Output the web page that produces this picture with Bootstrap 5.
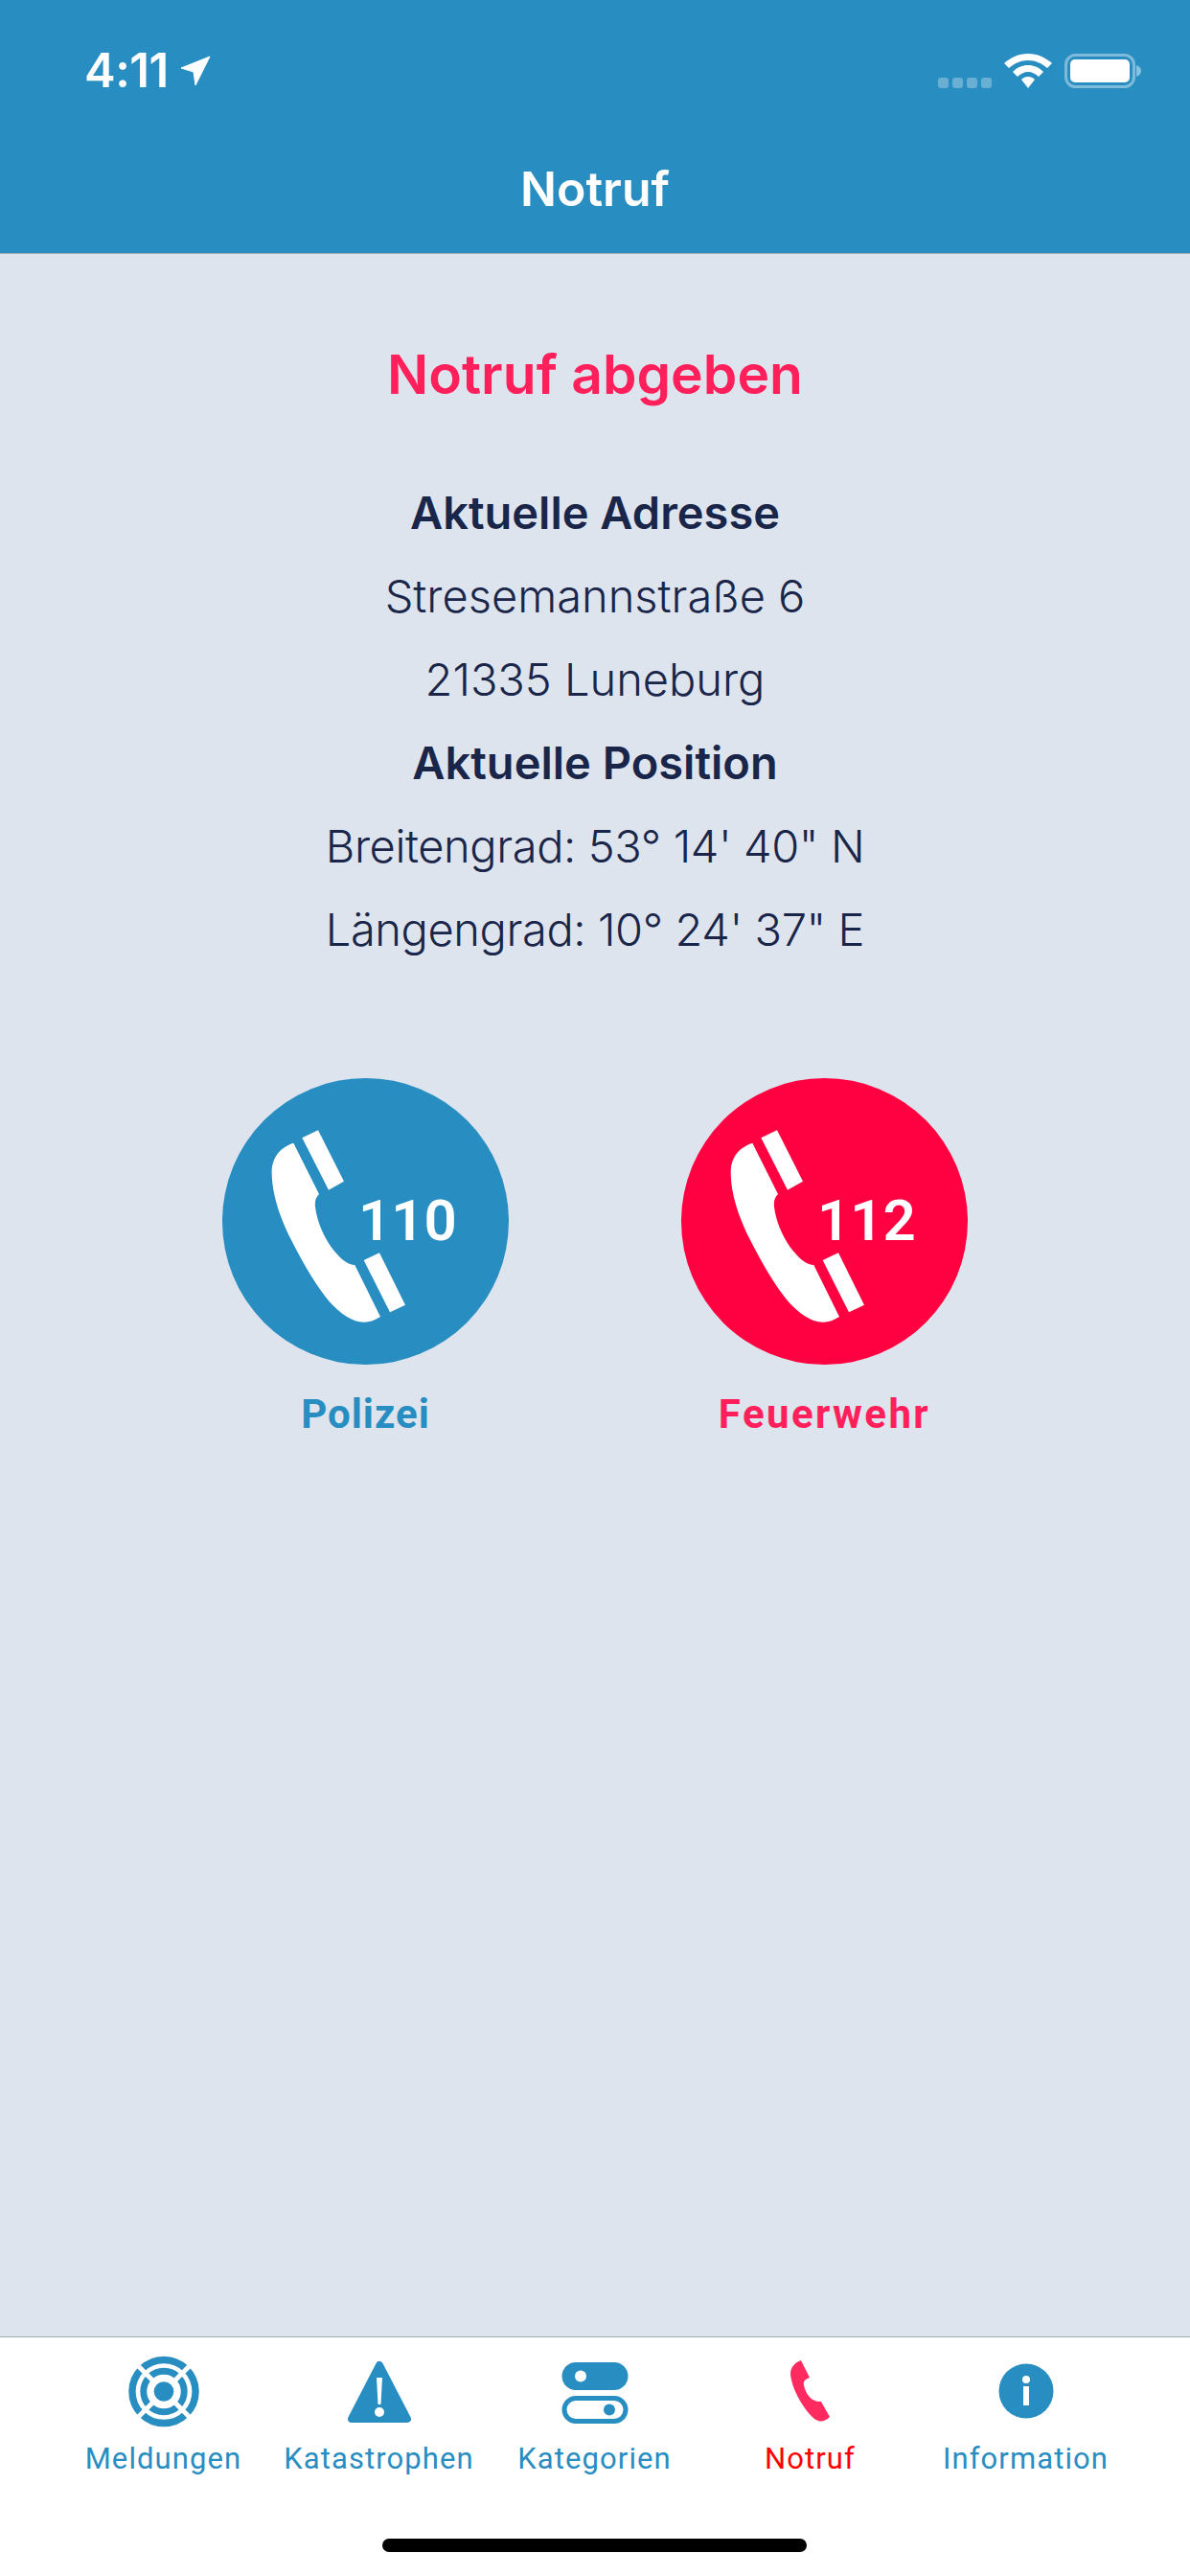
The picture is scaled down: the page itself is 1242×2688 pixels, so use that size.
<!DOCTYPE html>
<html lang="de">
<head>
  <meta charset="UTF-8"/>
  <title>Notruf</title>
  <meta name="viewport" content="width=device-width, initial-scale=1"/>
  <link href="https://cdn.jsdelivr.net/npm/bootstrap@5.3.0/dist/css/bootstrap.min.css" rel="stylesheet"/>
  <style>
    body{background:#dee4ee;font-family:'Inter',sans-serif;}
    .app-shell{width:1242px;height:2688px;}
    .top-head{background:#288dc1;height:265px;border-bottom:1px solid #a3adb8;color:#fff;}
    .status-row{height:56px;margin-top:56px;padding:0 51px 0 88px;}
    .clock{font-size:49px;font-weight:600;line-height:36px;letter-spacing:-.5px;}
    .loc-arrow{width:32px;height:31px;margin-left:12px;margin-top:2px;}
    .sig-dots{gap:4px;margin:25px 13px 0 0;}
    .sig-dots span{width:11px;height:11px;border-radius:3px;background:rgba(255,255,255,.3);}
    .wifi-ic{width:50px;height:36px;margin-right:13px;}
    .batt-ic{width:80px;height:36px;}
    .head-title{font-size:50px;font-weight:600;line-height:58px;margin-top:56px;}
    .main-body{padding-top:96px;color:#1a2649;}
    .page-title{color:#ff1f5a;font-size:57px;font-weight:600;line-height:60px;margin-bottom:70px;}
    .info-line{font-size:47px;font-weight:300;line-height:87px;height:87px;}
    .info-line.strong-line{font-weight:600;}
    .info-line.coord-line{letter-spacing:-.4px;}
    .call-row{gap:180px;margin-top:112px;}
    .call-item{width:299px;}
    .call-circle{width:299px;height:299px;}
    .call-circle.police{background:#288dc1;}
    .call-circle.fire{background:#ff0040;}
    .call-circle svg{width:299px;height:299px;display:block;}
    .call-num{position:absolute;left:142px;top:119px;color:#fff;font-family:'Roboto',sans-serif;font-weight:600;font-size:60px;line-height:60px;}
    .call-label{font-family:'Roboto',sans-serif;font-weight:700;font-size:42px;line-height:48px;margin-top:28px;}
    .call-label.police{color:#288dc1;letter-spacing:1px;}
    .call-label.fire{color:#ff1f5a;letter-spacing:2.4px;}
    .tab-bar{height:250px;background:#fff;border-top:1px solid #a3adb8;padding:0 59px 0 58px;}
    .tab-item{width:225px;color:#288dc1;font-family:'Roboto',sans-serif;font-size:31px;line-height:36px;letter-spacing:1.1px;padding-top:19px;}
    .tab-item.on{color:#ff0000;}
    .tab-ic{height:75px;display:block;margin-bottom:15px;}
    .home-bar{width:443px;height:14px;background:#000;border-radius:7px;margin:0 auto 25px;}
  </style>
</head>
<body>
<svg width="0" height="0" class="d-block position-absolute">
  <symbol id="handset" viewBox="95 75 897 897">
    <path fill="#fff" d="M318 278L398 438C388 448 384 460 386 478C392 530 420 590 456 628C470 644 490 660 510 660L590 822C570 835 550 842 525 838C490 832 450 800 420 762C380 710 340 640 300 560C270 495 250 430 250 370C250 320 280 290 318 278Z"/>
    <path fill="#fff" d="M345 262L395 238L476 398L428 425Z"/>
    <path fill="#fff" d="M538 645L587 622L668 785L620 808Z"/>
  </symbol>
</svg>
<div class="app-shell d-flex flex-column">
  <header class="top-head flex-shrink-0">
    <div class="status-row d-flex align-items-start">
      <span class="clock">4:11</span>
      <svg class="loc-arrow" viewBox="0 0 32 31"><path fill="#fff" d="M1 13L31 1L16 31L14 17Z" stroke="#fff" stroke-width="1" stroke-linejoin="round"/></svg>
      <div class="ms-auto d-flex sig-dots"><span></span><span></span><span></span><span></span></div>
      <svg class="wifi-ic" viewBox="0 0 50 36">
        <path fill="#fff" d="M25 0C35 0 43 4 50 10L45 15C39 10 33 7 25 7C17 7 11 10 5 15L0 10C7 4 15 0 25 0Z"/>
        <path fill="#fff" d="M25 12C31 12 36 14 41 19L36 24C33 21 29 19 25 19C21 19 17 21 14 24L9 19C14 14 19 12 25 12Z"/>
        <path fill="#fff" d="M25 24C28 24 30 25 32 27L25 36L18 27C20 25 22 24 25 24Z"/>
      </svg>
      <svg class="batt-ic" viewBox="0 0 80 36">
        <rect x="1.5" y="1.5" width="71" height="33" rx="10" fill="none" stroke="#fff" stroke-opacity=".4" stroke-width="3"/>
        <rect x="6" y="6" width="62" height="24" rx="5" fill="#fff"/>
        <path fill="#fff" fill-opacity=".45" d="M75 12C78 13 80 15 80 18C80 21 78 23 75 24Z"/>
      </svg>
    </div>
    <div class="head-title text-center">Notruf</div>
  </header>

  <main class="main-body flex-grow-1 text-center">
    <div class="page-title">Notruf abgeben</div>
    <div class="info-line strong-line">Aktuelle Adresse</div>
    <div class="info-line">Stresemannstraße 6</div>
    <div class="info-line">21335 Luneburg</div>
    <div class="info-line strong-line">Aktuelle Position</div>
    <div class="info-line coord-line">Breitengrad: 53° 14' 40" N</div>
    <div class="info-line coord-line">Längengrad: 10° 24' 37" E</div>
    <div class="call-row d-flex justify-content-center">
      <div class="call-item">
        <div class="call-circle police rounded-circle position-relative">
          <svg><use href="#handset"/></svg>
          <span class="call-num">110</span>
        </div>
        <div class="call-label police">Polizei</div>
      </div>
      <div class="call-item">
        <div class="call-circle fire rounded-circle position-relative">
          <svg><use href="#handset"/></svg>
          <span class="call-num">112</span>
        </div>
        <div class="call-label fire">Feuerwehr</div>
      </div>
    </div>
  </main>

  <div class="flex-shrink-0 tab-bar d-flex flex-column">
    <nav class="d-flex flex-grow-1 text-center">
      <div class="tab-item">
        <svg class="tab-ic mx-auto" width="76" viewBox="-38 -38 76 76">
          <circle r="33.5" fill="none" stroke="#288dc1" stroke-width="7.5"/>
          <circle r="21.5" fill="none" stroke="#288dc1" stroke-width="7"/>
          <path d="M-30 -30L30 30M30 -30L-30 30" stroke="#fff" stroke-width="5"/>
          <circle r="10.5" fill="#288dc1"/>
        </svg>
        Meldungen
      </div>
      <div class="tab-item">
        <svg class="tab-ic mx-auto" width="68" viewBox="0 0 68 75">
          <path d="M34 10L63 66H5Z" fill="#288dc1" stroke="#288dc1" stroke-width="8" stroke-linejoin="round"/>
          <path d="M31 23H37L35.5 51H32.5Z" fill="#fff"/>
          <circle cx="34" cy="59" r="5" fill="#fff"/>
        </svg>
        Katastrophen
      </div>
      <div class="tab-item">
        <svg class="tab-ic mx-auto" width="70" viewBox="0 0 70 75">
          <rect x="0.5" y="7" width="69" height="29" rx="14.5" fill="#288dc1"/>
          <circle cx="20" cy="21.5" r="6" fill="#fff"/>
          <rect x="3" y="44.5" width="64" height="24" rx="12" fill="none" stroke="#288dc1" stroke-width="5"/>
          <circle cx="50" cy="56.5" r="6" fill="#288dc1"/>
        </svg>
        Kategorien
      </div>
      <div class="tab-item on">
        <svg class="tab-ic mx-auto" width="42" viewBox="0 0 42 75">
          <path fill="#ff2a5f" d="M11 5L20 23C15 25 13 27 14 31C16 40 22 49 32 48L41 64C36 69 30 70 25 66C15 58 1 35 0 19C0 12 5 7 11 5Z"/>
        </svg>
        Notruf
      </div>
      <div class="tab-item">
        <svg class="tab-ic mx-auto" width="58" viewBox="0 0 58 75">
          <circle cx="29" cy="37" r="28.5" fill="#288dc1"/>
          <circle cx="29" cy="25" r="4" fill="#fff"/>
          <rect x="26" y="32" width="6" height="20" fill="#fff"/>
        </svg>
        Information
      </div>
    </nav>
    <div class="home-bar"></div>
  </div>
</div>
<script src="https://cdn.jsdelivr.net/npm/bootstrap@5.3.0/dist/js/bootstrap.bundle.min.js"></script>
</body>
</html>
